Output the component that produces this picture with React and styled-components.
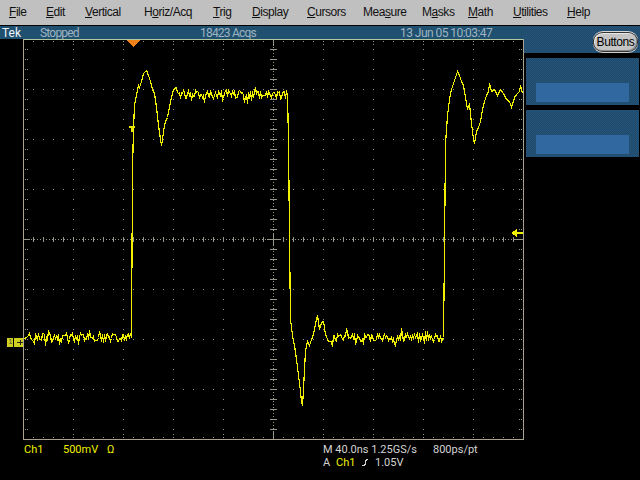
import React from 'react';
import styled, { createGlobalStyle } from 'styled-components';

const GlobalStyle = createGlobalStyle`
  html, body {
    margin: 0;
    padding: 0;
    background: #000;
    overflow: hidden;
  }
`;

const Screen = styled.div`
  width: 640px;
  height: 480px;
  background: #000;
  font-family: "Liberation Sans", Arial, sans-serif;
  display: flex;
  flex-direction: column;
`;

const MenuBar = styled.div`
  height: 24px;
  flex: none;
  padding: 0 0 1px 9px;
  background: #c0c0c0;
  border-bottom: 1px solid #000;
  display: flex;
  align-items: center;
`;

const MenuItem = styled.div`
  flex: 0 0 ${(p) => p.$w}px;
  font-size: 12px;
  letter-spacing: -0.45px;
  color: #111;
  white-space: pre;
`;

const Body = styled.div`
  flex: 1;
  display: flex;
`;

const LeftColumn = styled.div`
  width: 524px;
  flex: none;
  display: flex;
  flex-direction: column;
`;

const StatusBar = styled.div`
  height: 13px;
  flex: none;
  background: #20506f;
  display: flex;
  align-items: center;
  font-family: Roboto, "Liberation Sans", sans-serif;
  font-size: 12px;
  white-space: pre;
`;

const StatusItem = styled.div`
  flex: 0 0 ${(p) => p.$w}px;
  box-sizing: border-box;
  padding-left: ${(p) => (p.$bright ? 2 : 0)}px;
  color: ${(p) => (p.$bright ? '#f0f4f8' : '#9fb4c2')};
  letter-spacing: ${(p) => (p.$spaced ? '-0.55px' : p.$bright ? '0' : '-0.8px')};
`;

const ScopeSvg = styled.svg`
  display: block;
  width: 524px;
  height: 401px;
  flex: none;
`;

const Readouts = styled.div`
  flex: 1;
  padding-top: 3px;
  display: flex;
  font-family: Roboto, "Liberation Sans", sans-serif;
  font-size: 11px;
  line-height: 13px;
  white-space: pre;
`;

const ChannelReadout = styled.div`
  flex: 0 0 323px;
  padding-left: 24px;
  box-sizing: border-box;
  display: flex;
  color: #f0f000;
`;

const TimebaseReadout = styled.div`
  display: flex;
  flex-direction: column;
  color: #d4d4d4;
`;

const ReadoutRow = styled.div`
  display: flex;
  align-items: center;
  height: 13px;
`;

const Cell = styled.span`
  flex: 0 0 ${(p) => p.$w}px;
  color: ${(p) => (p.$yellow ? '#f0f000' : 'inherit')};
`;

const RightColumn = styled.div`
  flex: 1;
  display: flex;
  flex-direction: column;
`;

const dither = `
  background-color: #214e72;
  background-image: repeating-conic-gradient(#1e4a6c 0 25%, #25537a 0 50%);
  background-size: 2px 2px;
`;

const ButtonBar = styled.div`
  height: 26px;
  flex: none;
  margin-bottom: 5px;
  ${dither}
  display: flex;
  justify-content: flex-end;
  align-items: flex-end;
  padding: 0 2px 1px 0;
`;

const ToggleButton = styled.div`
  width: 45px;
  height: 20px;
  box-sizing: border-box;
  background: #c4c4c4;
  border: 1px solid #333;
  border-radius: 10px / 9px;
  box-shadow: inset 1px 1px 0 #e8e8e8, inset -1px -1px 0 #8c8c8c, 0 -1px 0 #d8d8d8, 0 1px 0 #d0d0d0;
  font-size: 12px;
  letter-spacing: -0.4px;
  line-height: 18px;
  text-align: center;
  color: #000;
`;

const SoftKey = styled.div`
  height: 47px;
  box-sizing: border-box;
  margin: 0 1px 5px 2px;
  padding: 25px 10px 3px;
  ${dither}
`;

const SoftKeyLabel = styled.div`
  height: 19px;
  background: #30689f;
`;

const MENU = [
  ['', 'F', 'ile', 37],
  ['', 'E', 'dit', 39],
  ['', 'V', 'ertical', 59],
  ['H', 'o', 'riz/Acq', 69],
  ['', 'T', 'rig', 39],
  ['', 'D', 'isplay', 55],
  ['', 'C', 'ursors', 56],
  ['Mea', 's', 'ure', 59],
  ['M', 'a', 'sks', 46],
  ['', 'M', 'ath', 45],
  ['', 'U', 'tilities', 54],
  ['', 'H', 'elp', 40],
];

// anchors read off the waveform, x/y in scope coordinates
const EDGE_HIGH = [
  [131, 298], [132, 130], [133, 89], [134, 66], [136, 56], [138, 46], [139, 48], [141, 42],
  [143, 34], [145, 32], [146, 31], [148, 36], [150, 42], [152, 50], [154, 54], [156, 68],
  [158, 86], [160, 100], [161, 106], [162, 100], [163, 92], [165, 82], [167, 78], [169, 68],
  [171, 58], [173, 50], [176, 48],
];
const EDGE_LOW = [
  [287, 56], [288, 100], [289, 200], [290, 280], [292, 296], [294, 306], [296, 320], [298, 336],
  [300, 352], [301, 362], [302, 366], [303, 350], [304, 330], [305, 312], [307, 302], [309, 306],
  [311, 300], [313, 295], [315, 284], [317, 276], [319, 290], [321, 283], [323, 282], [325, 295],
  [328, 302],
];
const EDGE_HIGH2 = [
  [443, 298], [444, 210], [445, 104], [447, 76], [449, 60], [451, 50], [453, 44], [455, 38],
  [457, 32], [459, 36], [461, 42], [463, 46], [465, 58], [467, 70], [469, 64], [471, 84],
  [473, 100], [474, 104], [476, 92], [478, 88], [480, 82], [482, 70], [484, 62], [486, 56],
  [488, 52], [489, 44], [491, 52], [494, 50], [497, 56], [500, 50], [503, 54], [506, 60],
  [509, 62], [511, 68], [514, 58], [517, 54], [519, 52], [520, 46], [522, 54],
];

let seed = 37;
const rnd = () => {
  seed = (seed * 1103515245 + 12345) & 0x7fffffff;
  return (seed >> 12) % 1000 / 1000;
};

const plateau = (from, to, base) => {
  const pts = [];
  for (let x = from; x < to; x += 1) {
    const r = rnd();
    const spike = r > 0.92 ? 5 : r < 0.08 ? -5 : 0;
    pts.push([x, base + Math.round((rnd() - 0.5) * 9) + spike]);
  }
  return pts;
};

const TRACE = [
  ...plateau(24, 131, 298),
  ...EDGE_HIGH,
  ...plateau(177, 287, 55),
  ...EDGE_LOW,
  ...plateau(329, 443, 298),
  ...EDGE_HIGH2,
].map(([x, y]) => `${x},${y}`).join(' ');

const dot = (x, y, w = 1, h = 1) => `M${x} ${y}h${w}v${h}h${-w}z`;

const buildGrid = () => {
  let d = '';
  const [L, R, T, B, CX, CY] = [23, 523, 0, 400, 273, 200];
  // dotted lines every division, a dot each 10px
  for (let x = L + 50; x < R; x += 50) {
    if (x === CX) continue;
    for (let y = T + 10; y < B; y += 10) d += dot(x, y);
  }
  for (let y = T + 50; y < B; y += 50) {
    if (y === CY) continue;
    for (let x = L + 10; x < R; x += 10) d += dot(x, y);
  }
  // edge ticks
  for (let x = L + 10; x < R; x += 10) {
    d += dot(x, T + 2) + dot(x, B - 2);
    if ((x - L) % 50 === 0) d += dot(x, T + 5) + dot(x, B - 5);
  }
  for (let y = T + 10; y < B; y += 10) {
    d += dot(L + 2, y) + dot(L + 4, y) + dot(R - 4, y) + dot(R - 2, y);
  }
  // centre lines
  for (let y = T + 2; y < B; y += 3) d += dot(CX, y);
  for (let x = L + 2; x < R; x += 3) d += dot(x, CY);
  for (let y = T + 10; y < B; y += 10) d += dot(CX - 3, y, 7, 1);
  for (let x = L + 10; x < R; x += 10) d += dot(x, CY - 2, 1, 5);
  // solid bits at centre and edges
  d += dot(CX - 6, CY, 13, 1) + dot(CX, CY - 6, 1, 13);
  d += dot(L, CY, 7, 1) + dot(R - 10, CY, 10, 1);
  d += dot(CX, T, 1, 7) + dot(CX, B - 7, 1, 7);
  return d;
};

const GRID = buildGrid();

const Scope = () => (
  <ScopeSvg viewBox="0 0 524 401" shapeRendering="crispEdges">
    <path d={GRID} fill="#98988a" />
    <path d="M23 0H524V1H23z" fill="#b4c8a0" />
    <path d="M23 0H24V401H23zM523 0H524V401H523zM23 400H524V401H23z" fill="#a8a490" />
    <polyline points={TRACE} transform="translate(0.5 0.5)" fill="none" stroke="#f0f000" strokeWidth="1.2" />
    {/* trigger position */}
    <path d="M127 1H140L134 8H133z" fill="#f08018" />
    {/* trigger level on the right edge */}
    <path d="M511 194L517 190V193H523V195H517V198z" fill="#f0f000" />
    {/* trigger T marker */}
    <path d="M129 87H135V89H133V93H131V89H129z" fill="#e8e800" />
    {/* channel 1 ground marker */}
    <path d="M7 299H13V308H7zM14 299H23V308H14z" fill="#d0d020" />
    <path d="M17 303H23V304H17zM20 301H21V306H20z" fill="#222" />
    <text x="8.5" y="305" fontSize="7" fontFamily="Liberation Sans" fill="#444">1</text>
  </ScopeSvg>
);

const Slope = () => (
  <svg width="7" height="9" viewBox="0 0 7 9" shapeRendering="crispEdges">
    <path d="M0 8H2V7H3V3H4V2H6" fill="none" stroke="#d4d4d4" />
  </svg>
);

const App = () => (
  <Screen>
    <GlobalStyle />
    <MenuBar>
      {MENU.map(([pre, key, post, w]) => (
        <MenuItem key={pre + key + post} $w={w}>
          {pre}<u>{key}</u>{post}
        </MenuItem>
      ))}
    </MenuBar>
    <Body>
      <LeftColumn>
        <StatusBar>
          <StatusItem $w={40} $bright>Tek</StatusItem>
          <StatusItem $w={160}>Stopped</StatusItem>
          <StatusItem $w={200}>18423 Acqs</StatusItem>
          <StatusItem $w={110} $spaced>13 Jun 05 10:03:47</StatusItem>
        </StatusBar>
        <Scope />
        <Readouts>
          <ChannelReadout>
            <Cell $w={39}>Ch1</Cell>
            <Cell $w={44}>500mV</Cell>
            <Cell $w={12}>Ω</Cell>
          </ChannelReadout>
          <TimebaseReadout>
            <ReadoutRow>
              <Cell $w={110}>M 40.0ns 1.25GS/s</Cell>
              <Cell $w={50}>800ps/pt</Cell>
            </ReadoutRow>
            <ReadoutRow>
              <Cell $w={13}>A</Cell>
              <Cell $w={26} $yellow>Ch1</Cell>
              <Cell $w={13}><Slope /></Cell>
              <Cell $w={30}>1.05V</Cell>
            </ReadoutRow>
          </TimebaseReadout>
        </Readouts>
      </LeftColumn>
      <RightColumn>
        <ButtonBar>
          <ToggleButton>Buttons</ToggleButton>
        </ButtonBar>
        <SoftKey><SoftKeyLabel /></SoftKey>
        <SoftKey><SoftKeyLabel /></SoftKey>
      </RightColumn>
    </Body>
  </Screen>
);

export default App;
